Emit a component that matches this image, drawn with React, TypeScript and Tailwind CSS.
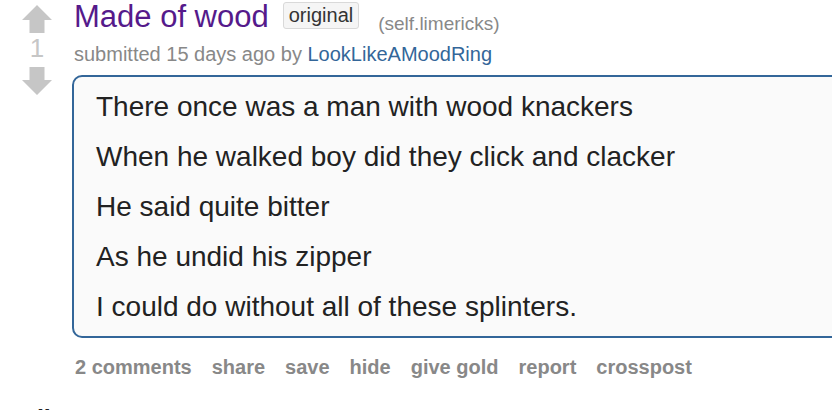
import React from "react";

const lines = [
  "There once was a man with wood knackers",
  "When he walked boy did they click and clacker",
  "He said quite bitter",
  "As he undid his zipper",
  "I could do without all of these splinters.",
];

const actions = ["2 comments", "share", "save", "hide", "give gold", "report", "crosspost"];

const Arrow = ({ down = false }: { down?: boolean }) => (
  <svg width="30" height="28" viewBox="0 0 30 28" className={down ? "rotate-180" : ""}>
    <polygon points="15,0 30,15 22.5,15 22.5,28 7.5,28 7.5,15 0,15" fill="#c6c6c6" />
  </svg>
);

export default function App() {
  return (
    <div
      className="relative w-[832px] h-[410px] overflow-hidden bg-white"
      style={{ fontFamily: '"Liberation Sans", Arial, Helvetica, sans-serif' }}
    >
      <div className="flex">
        {/* votes */}
        <div className="w-[72px] shrink-0 flex flex-col items-center pt-[5px] pr-[-2px]">
          <div className="ml-[2px]">
            <Arrow />
          </div>
          <div className="mt-[2px] text-[26px] leading-[26px] text-[#c6c6c6] ml-[2px]">1</div>
          <div className="mt-[6px] ml-[2px]">
            <Arrow down />
          </div>
        </div>

        {/* entry */}
        <div className="flex-1 min-w-0">
          <div className="flex items-start pl-[2px] whitespace-nowrap">
            <a className="text-[31px] leading-[34px] text-[#551a8b]">Made of wood</a>
            <span className="ml-[14px] mt-[2px] border border-[#d9d9d9] bg-[#f5f5f5] rounded-[3px] px-[5px] pt-[1px] pb-[1px] text-[20px] leading-[23px] text-[#333]">
              original
            </span>
            <span className="ml-[19px] mt-[13px] text-[19px] leading-[22px] text-[#888]">
              (self.limericks)
            </span>
          </div>

          <div className="mt-[7px] pl-[2px] text-[20px] leading-[24px] text-[#888] whitespace-nowrap">
            submitted 15 days ago by <a className="text-[#369]">LookLikeAMoodRing</a>
          </div>

          <div className="mt-[9px] w-[800px] border-2 border-[#369] rounded-[10px] bg-[#fafafa] pl-[22px] pt-[5px] pb-[4px]">
            {lines.map((l) => (
              <p key={l} className="text-[28px] leading-[50px] text-[#222] whitespace-nowrap">
                {l}
              </p>
            ))}
          </div>

          <ul className="mt-[17px] pl-[3px] flex gap-[20px] text-[20px] leading-[24px] font-bold text-[#888] whitespace-nowrap">
            {actions.map((a) => (
              <li key={a}>{a}</li>
            ))}
          </ul>
        </div>
      </div>

      <div className="mt-[26px] pl-[23px] text-[25px] leading-[28px] font-bold text-[#222] whitespace-nowrap">
        all 2 comments
      </div>
    </div>
  );
}
